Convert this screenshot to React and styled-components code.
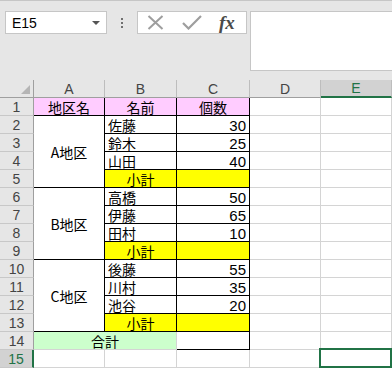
import React from 'react'
import styled, { createGlobalStyle } from 'styled-components'

const GlobalStyle = createGlobalStyle`
  html, body {
    margin: 0;
    padding: 0;
    background: #fff;
    overflow: hidden;
  }
  body {
    font-family: "Noto Sans CJK JP", "Liberation Sans", sans-serif;
  }
`

const GREEN = '#217346'
const GRID = '#d4d4d4'

const Window = styled.div`
  width: 392px;
  height: 369px;
  overflow: hidden;
  background: #fff;
`

const FormulaBar = styled.div`
  display: flex;
  align-items: flex-start;
  padding: 10px 0 0 5px;
  height: 80px;
  box-sizing: border-box;
  background: #e6e6e6;
  border-top: 1px solid #c6c6c6;
`

const NameBox = styled.div`
  width: 102px;
  height: 23px;
  box-sizing: border-box;
  background: #fff;
  border: 1px solid #c6c6c6;
  display: flex;
  align-items: center;
  justify-content: space-between;
  padding: 0 6px 0 6px;
  font-family: "Liberation Sans", sans-serif;
  font-size: 14px;
  color: #000;
`

const Arrow = styled.span`
  width: 0;
  height: 0;
  border-left: 4px solid transparent;
  border-right: 4px solid transparent;
  border-top: 4px solid #555;
`

const Dots = styled.div`
  width: 30px;
  height: 23px;
  display: flex;
  flex-direction: column;
  align-items: center;
  justify-content: center;
  gap: 2px;

  span {
    width: 2px;
    height: 2px;
    background: #6f6f6f;
  }
`

const FxButtons = styled.div`
  width: 110px;
  height: 23px;
  box-sizing: border-box;
  background: #fff;
  border: 1px solid #c6c6c6;
  display: flex;
  align-items: center;
  padding-left: 9px;
  gap: 18px;
`

const FxLabel = styled.span`
  font-family: "Liberation Serif", serif;
  font-style: italic;
  font-weight: bold;
  font-size: 19px;
  color: #4a4a4a;
  line-height: 1;
  margin-left: -1px;
`

const FormulaInput = styled.div`
  flex: 1;
  margin-left: 3px;
  height: 60px;
  box-sizing: border-box;
  background: #fff;
  border: 1px solid #c6c6c6;
  border-right: none;
`

const Sheet = styled.div`
  display: grid;
  grid-template-columns: 34px 71px 72px 73px 71px 71px;
  grid-auto-rows: 18px;
  background: #fff;
`

const Corner = styled.div`
  background: #e6e6e6;
  border-right: 1px solid #9f9f9f;
  border-bottom: 1px solid #9f9f9f;
  box-sizing: border-box;
  position: relative;

  &::after {
    content: '';
    position: absolute;
    right: 3px;
    bottom: 3px;
    width: 0;
    height: 0;
    border-left: 9px solid transparent;
    border-bottom: 9px solid #b5b5b5;
  }
`

const ColHead = styled.div`
  background: ${p => (p.$active ? '#d2d2d2' : '#e6e6e6')};
  color: ${p => (p.$active ? GREEN : '#444')};
  border-right: 1px solid #bdbdbd;
  border-bottom: ${p => (p.$active ? `2px solid ${GREEN}` : '1px solid #9f9f9f')};
  box-sizing: border-box;
  display: flex;
  align-items: center;
  justify-content: center;
  font-family: "Liberation Sans", sans-serif;
  font-size: 14px;
  line-height: 1;
`

const RowHead = styled.div`
  background: ${p => (p.$active ? '#d2d2d2' : '#e6e6e6')};
  color: ${p => (p.$active ? GREEN : '#444')};
  border-right: ${p => (p.$active ? `2px solid ${GREEN}` : '1px solid #9f9f9f')};
  border-bottom: 1px solid #c8c8c8;
  box-sizing: border-box;
  display: flex;
  align-items: center;
  justify-content: center;
  font-family: "Liberation Sans", sans-serif;
  font-size: 14px;
  line-height: 1;
`

const Cell = styled.div`
  grid-row: span ${p => p.$rs || 1};
  grid-column: span ${p => p.$cs || 1};
  background: ${p => p.$bg || '#fff'};
  border-right: 1px solid ${p => (p.$line ? '#000' : GRID)};
  border-bottom: 1px solid ${p => (p.$line ? '#000' : GRID)};
  box-sizing: border-box;
  display: flex;
  align-items: center;
  justify-content: ${p => (p.$align === 'center' ? 'center' : p.$align === 'right' ? 'flex-end' : 'flex-start')};
  padding: 1px 3px 0 3px;
  font-family: ${p => (p.$num ? '"Liberation Sans", sans-serif' : '"Noto Sans CJK JP", sans-serif')};
  font-size: ${p => (p.$num ? '15px' : '14px')};
  line-height: 1;
  color: #000;
  white-space: nowrap;
  position: relative;

  ${p =>
    p.$selected &&
    `
    &::after {
      content: '';
      position: absolute;
      left: -2px;
      top: -2px;
      right: -1px;
      bottom: -1px;
      border: 2px solid ${GREEN};
    }
  `}
`

const Label = styled.span`
  display: block;
  line-height: 1;
`

const PINK = '#ffccff'
const YELLOW = '#ffff00'
const MINT = '#ccffcc'

const data = {
  A1: { t: '地区名', bg: PINK, a: 'center', line: true },
  B1: { t: '名前', bg: PINK, a: 'center', line: true },
  C1: { t: '個数', bg: PINK, a: 'center', line: true },
  A2: { t: 'A地区', rs: 4, a: 'center', line: true },
  B2: { t: '佐藤', line: true },
  C2: { t: '30', a: 'right', line: true, num: true },
  B3: { t: '鈴木', line: true },
  C3: { t: '25', a: 'right', line: true, num: true },
  B4: { t: '山田', line: true },
  C4: { t: '40', a: 'right', line: true, num: true },
  B5: { t: '小計', bg: YELLOW, a: 'center', line: true },
  C5: { bg: YELLOW, line: true },
  A6: { t: 'B地区', rs: 4, a: 'center', line: true },
  B6: { t: '高橋', line: true },
  C6: { t: '50', a: 'right', line: true, num: true },
  B7: { t: '伊藤', line: true },
  C7: { t: '65', a: 'right', line: true, num: true },
  B8: { t: '田村', line: true },
  C8: { t: '10', a: 'right', line: true, num: true },
  B9: { t: '小計', bg: YELLOW, a: 'center', line: true },
  C9: { bg: YELLOW, line: true },
  A10: { t: 'C地区', rs: 4, a: 'center', line: true },
  B10: { t: '後藤', line: true },
  C10: { t: '55', a: 'right', line: true, num: true },
  B11: { t: '川村', line: true },
  C11: { t: '35', a: 'right', line: true, num: true },
  B12: { t: '池谷', line: true },
  C12: { t: '20', a: 'right', line: true, num: true },
  B13: { t: '小計', bg: YELLOW, a: 'center', line: true },
  C13: { bg: YELLOW, line: true },
  A14: { t: '合計', cs: 2, bg: MINT, a: 'center' },
  C14: { line: true },
}

const covered = new Set(['A3', 'A4', 'A5', 'A7', 'A8', 'A9', 'A11', 'A12', 'A13', 'B14'])
const cols = ['A', 'B', 'C', 'D', 'E']
const rows = Array.from({ length: 15 }, (_, i) => i + 1)

const CrossIcon = () => (
  <svg width="17" height="15" viewBox="0 0 17 15">
    <path d="M1.5 1 L15.5 14 M15.5 1 L1.5 14" stroke="#9e9e9e" strokeWidth="2" fill="none" />
  </svg>
)

const CheckIcon = () => (
  <svg width="20" height="15" viewBox="0 0 20 15">
    <path d="M1 8 L6.5 13.5 L19 1" stroke="#9e9e9e" strokeWidth="2.2" fill="none" />
  </svg>
)

export default function App() {
  return (
    <Window>
      <GlobalStyle />
      <FormulaBar>
        <NameBox>
          <span>E15</span>
          <Arrow />
        </NameBox>
        <Dots>
          <span />
          <span />
          <span />
        </Dots>
        <FxButtons>
          <CrossIcon />
          <CheckIcon />
          <FxLabel>fx</FxLabel>
        </FxButtons>
        <FormulaInput />
      </FormulaBar>
      <Sheet>
        <Corner />
        {cols.map(c => (
          <ColHead key={c} $active={c === 'E'}>{c}</ColHead>
        ))}
        {rows.map(r => (
          <React.Fragment key={r}>
            <RowHead $active={r === 15}>{r}</RowHead>
            {cols.map(c => {
              const id = c + r
              if (covered.has(id)) return null
              const d = data[id] || {}
              return (
                <Cell
                  key={id}
                  $rs={d.rs}
                  $cs={d.cs}
                  $bg={d.bg}
                  $align={d.a}
                  $line={d.line}
                  $num={d.num}
                  $selected={id === 'E15'}
                >
                  {d.t && <Label>{d.t}</Label>}
                </Cell>
              )
            })}
          </React.Fragment>
        ))}
      </Sheet>
    </Window>
  )
}
